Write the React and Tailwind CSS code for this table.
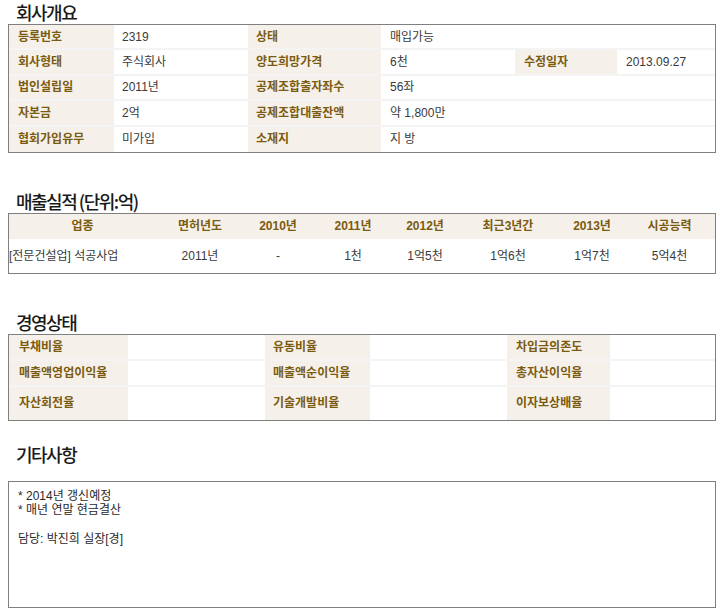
const FONT = { fontFamily: '"Liberation Sans", "Noto Sans CJK KR", sans-serif' };

function Title({ children, className = "" }) {
  return (
    <h2
      className={`h-6 pl-4 text-[18px] leading-6 font-medium tracking-[-1.5px] text-[#1a1a1a] ${className}`}
      style={{ fontFamily: '"Noto Sans CJK KR", sans-serif' }}
    >
      {children}
    </h2>
  );
}

const label = "bg-[#f6f0eb] font-bold text-[#7a5b10] flex items-center";
const value = "flex items-center text-[#3a3a3a]";

const overview = [
  [["등록번호", "2319"], ["상태", "매입가능"]],
  [["회사형태", "주식회사"], ["양도희망가격", "6천"], ["수정일자", "2013.09.27"]],
  [["법인설립일", "2011년"], ["공제조합출자좌수", "56좌"]],
  [["자본금", "2억"], ["공제조합대출잔액", "약 1,800만"]],
  [["협회가입유무", "미가입"], ["소재지", "지 방"]],
];

const sales = {
  head: ["업종", "면허년도", "2010년", "2011년", "2012년", "최근3년간", "2013년", "시공능력"],
  row: ["[전문건설업] 석공사업", "2011년", "-", "1천", "1억5천", "1억6천", "1억7천", "5억4천"],
  widths: ["w-[147px]", "w-[88px]", "w-[68px]", "w-[82px]", "w-[62px]", "w-[104px]", "w-[64px]", "flex-1"],
};

const status = [
  ["부채비율", "유동비율", "차입금의존도"],
  ["매출액영업이익율", "매출액순이익율", "총자산이익율"],
  ["자산회전율", "기술개발비율", "이자보상배율"],
];

export default function App() {
  return (
    <div className="w-[720px] bg-white text-[12px] pb-2" style={FONT}>
      <Title>회사개요</Title>
      <div className="ml-2 w-[708px] border border-[#7f7f7f]">
        {overview.map((row, i) => (
          <div
            key={i}
            className={`flex h-[25.4px] ${i < overview.length - 1 ? "border-b-2 border-[#f4f4f4]" : ""}`}
          >
            <div className={`${label} w-[105px] pl-[9px]`}>{row[0][0]}</div>
            <div className={`${value} w-[134px] pl-2`}>{row[0][1]}</div>
            <div className={`${label} w-[133px] pl-2`}>{row[1][0]}</div>
            {row[2] ? (
              <>
                <div className={`${value} w-[134px] pl-[9px]`}>{row[1][1]}</div>
                <div className={`${label} w-[102px] pl-[9px]`}>{row[2][0]}</div>
                <div className={`${value} flex-1 pl-[9px]`}>{row[2][1]}</div>
              </>
            ) : (
              <div className={`${value} flex-1 pl-[9px]`}>{row[1][1]}</div>
            )}
          </div>
        ))}
      </div>

      <Title className="mt-[36px]">매출실적 (단위:억)</Title>
      <div className="ml-2 w-[708px] border border-[#7f7f7f]">
        <div className="flex h-[25px] bg-[#f6f0eb] font-bold text-[#7a5b10]">
          {sales.head.map((h, i) => (
            <div key={i} className={`${sales.widths[i]} flex items-center justify-center`}>
              {h}
            </div>
          ))}
        </div>
        <div className="flex h-[34px] text-[#3a3a3a]">
          {sales.row.map((c, i) => (
            <div
              key={i}
              className={`${sales.widths[i]} flex items-center ${i === 0 ? "justify-start" : "justify-center"}`}
            >
              {c}
            </div>
          ))}
        </div>
      </div>

      <Title className="mt-[36px]">경영상태</Title>
      <div className="ml-2 w-[708px] border border-[#7f7f7f]">
        {status.map((row, i) => (
          <div
            key={i}
            className={`flex ${i === 2 ? "h-[33px]" : "h-[26px] border-b-2 border-[#f4f4f4]"}`}
          >
            <div className={`${label} w-[119px] pl-[10px]`}>{row[0]}</div>
            <div className="w-[137px]" />
            <div className={`${label} w-[105px] pl-2`}>{row[1]}</div>
            <div className="w-[137px]" />
            <div className={`${label} w-[103px] pl-[9px]`}>{row[2]}</div>
            <div className="flex-1" />
          </div>
        ))}
      </div>

      <Title className="mt-[21px]">기타사항</Title>
      <div className="ml-2 mt-[15px] w-[708px] h-[127px] border border-[#7f7f7f] pl-[9px] pt-[7px] leading-[14.5px] text-[#2a2a2a]">
        <p>* 2014년 갱신예정</p>
        <p>* 매년 연말 현금결산</p>
        <p>&nbsp;</p>
        <p>담당: 박진희 실장[경]</p>
      </div>
    </div>
  );
}
